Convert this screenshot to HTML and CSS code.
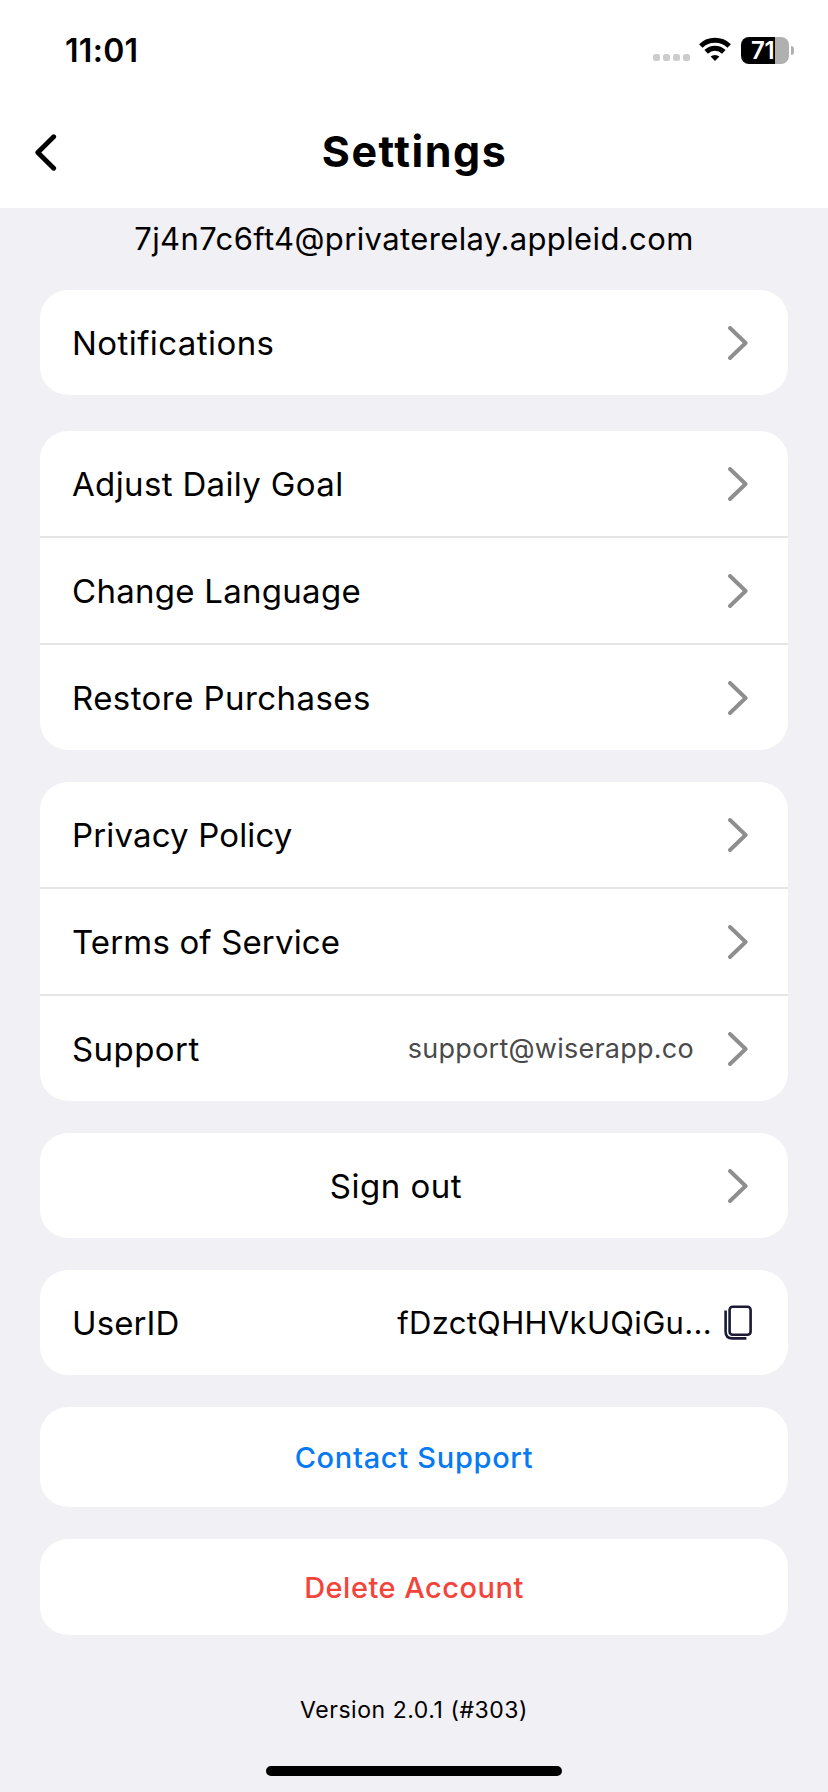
FILE: index.html
```html
<!DOCTYPE html>
<html lang="en">
<head>
<meta charset="utf-8">
<title>Settings</title>
<link rel="stylesheet" href="styles.css">
</head>
<body>
<svg class="defs" width="0" height="0" aria-hidden="true">
  <symbol id="chevron" viewBox="0 0 20 34"><path d="M2 2L17.6 17L2 32" fill="none" stroke="currentColor" stroke-width="3.9" stroke-linecap="round" stroke-linejoin="round"/></symbol>
</svg>
<header class="header">
  <div class="status">
    <span class="time">11:01</span>
    <div class="indicators">
      <span class="dots"><i></i><i></i><i></i><i></i></span>
      <svg class="wifi" viewBox="0 0 32 24">
        <g fill="none" stroke="#000" stroke-width="5">
          <path d="M1.8 9A20.5 20.5 0 0 1 30.2 9"/>
          <path d="M7.2 14.9A12.6 12.6 0 0 1 24.8 14.9"/>
        </g>
        <path d="M16 24L11.6 19.6A6.8 6.8 0 0 1 20.4 19.6Z"/>
      </svg>
      <div class="battery"><span class="battery-body"><b>71</b></span><span class="battery-cap"></span></div>
    </div>
  </div>
  <div class="nav">
    <svg class="back" viewBox="0 0 22 37"><path d="M18.7 2.7L2.8 18.5L18.7 34.3" fill="none" stroke="#000" stroke-width="4.8" stroke-linecap="round" stroke-linejoin="round"/></svg>
    <h1 class="title">Settings</h1>
  </div>
</header>
<main class="content">
  <p class="account">7j4n7c6ft4@privaterelay.appleid.com</p>
  <section class="card card-first">
    <div class="row"><span class="label">Notifications</span><svg class="chev"><use href="#chevron"/></svg></div>
  </section>
  <section class="card">
    <div class="row"><span class="label l-goal">Adjust Daily Goal</span><svg class="chev"><use href="#chevron"/></svg></div>
    <div class="row"><span class="label l-lang">Change Language</span><svg class="chev"><use href="#chevron"/></svg></div>
    <div class="row"><span class="label">Restore Purchases</span><svg class="chev"><use href="#chevron"/></svg></div>
  </section>
  <section class="card">
    <div class="row"><span class="label l-privacy">Privacy Policy</span><svg class="chev"><use href="#chevron"/></svg></div>
    <div class="row"><span class="label l-terms">Terms of Service</span><svg class="chev"><use href="#chevron"/></svg></div>
    <div class="row"><span class="label">Support</span><span class="detail">support@wiserapp.co</span><svg class="chev"><use href="#chevron"/></svg></div>
  </section>
  <section class="card">
    <div class="row"><span class="label label-center">Sign out</span><svg class="chev"><use href="#chevron"/></svg></div>
  </section>
  <section class="card">
    <div class="row row-id"><span class="label l-user">UserID</span><span class="user-id">fDzctQHHVkUQiGu...</span>
      <svg class="copy" viewBox="0 0 28 35" fill="none" stroke="#1b1a36" stroke-width="2.6"><rect x="5.6" y="1.7" width="21" height="28" rx="3"/><path d="M1.6 5.4V26.5Q1.6 33.4 8.4 33.4H22.4"/></svg>
    </div>
  </section>
  <section class="card"><div class="action action-contact">Contact Support</div></section>
  <section class="card"><div class="action action-delete">Delete Account</div></section>
  <p class="version">Version 2.0.1 (#303)</p>
  <div class="home-bar"></div>
</main>
</body>
</html>
```
FILE: styles.css
```css
* { box-sizing: border-box; margin: 0; padding: 0; }
body { width: 828px; height: 1792px; overflow: hidden; background: #f0f0f5; color: #000; font-family: Inter, "Liberation Sans", sans-serif; white-space: nowrap; display: flex; flex-direction: column; }
.defs { display: none; }
.header { height: 208px; background: #fff; }
.status { height: 100px; padding: 0 34px 0 65px; display: flex; justify-content: space-between; align-items: center; }
.time { font-size: 32px; font-weight: 600; letter-spacing: 0.3px; }
.indicators { display: flex; align-items: center; }
.dots { display: flex; gap: 3px; margin: 15px 9px 0 0; }
.dots i { width: 7px; height: 7px; border-radius: 2.5px; background: #ccc; }
.wifi { width: 32px; height: 24px; margin: -2px 10px 0 0; }
.battery { display: flex; align-items: center; gap: 2px; }
.battery-body { width: 48px; height: 27px; border-radius: 8px; background: linear-gradient(90deg, #000 34px, #b0b0b0 34px); color: #fff; display: flex; align-items: center; padding-left: 10px; }
.battery-body b { font-size: 24px; font-weight: 600; letter-spacing: -0.3px; }
.battery-cap { width: 3px; height: 9px; border-radius: 0 4px 4px 0; background: #b0b0b0; }
.nav { height: 104px; padding: 0 35px; display: grid; grid-template-columns: 22px 1fr 22px; align-items: center; }
.back { width: 22px; height: 37px; }
.title { padding: 0 0 2px 1px; text-align: center; font-size: 43px; font-weight: 700; letter-spacing: 1.5px; }
.content { flex: 1; padding: 0 40px; display: flex; flex-direction: column; gap: 32px; }
.account { height: 50px; line-height: 62px; text-align: center; font-size: 31px; letter-spacing: 0.38px; }
.card { background: #fff; border-radius: 28px; }
.card-first { margin-bottom: 4px; }
.row { height: 105px; padding: 0 40px 0 32px; display: flex; align-items: center; }
.row + .row { height: 107px; border-top: 2px solid #e5e5e5; }
.label { flex: 1; font-size: 33px; letter-spacing: 0.43px; }
.l-goal { letter-spacing: 0.35px; }
.l-lang { letter-spacing: 0.27px; }
.l-privacy, .l-terms { letter-spacing: 0.15px; }
.l-user { letter-spacing: 0.1px; }
.label-center { text-align: center; padding-right: 8px; letter-spacing: 0.5px; }
.detail { font-size: 27px; letter-spacing: 0.25px; color: #4a4a4a; margin-right: 34px; }
.chev { width: 20px; height: 34px; color: #8e8e8e; }
.row-id { padding-right: 36px; }
.user-id { font-size: 31px; letter-spacing: 0.32px; margin-right: 12px; }
.copy { width: 28px; height: 35px; }
.action { display: flex; align-items: center; justify-content: center; font-size: 29px; font-weight: 500; letter-spacing: 0.7px; }
.action-contact { height: 100px; color: #067af2; }
.action-delete { height: 96px; color: #f4433a; letter-spacing: 0.5px; }
.version { margin-top: 27px; line-height: 32px; text-align: center; font-size: 23px; letter-spacing: 0.55px; }
.home-bar { width: 296px; height: 10px; border-radius: 5px; background: #000; align-self: center; margin-top: 8px; }
```
